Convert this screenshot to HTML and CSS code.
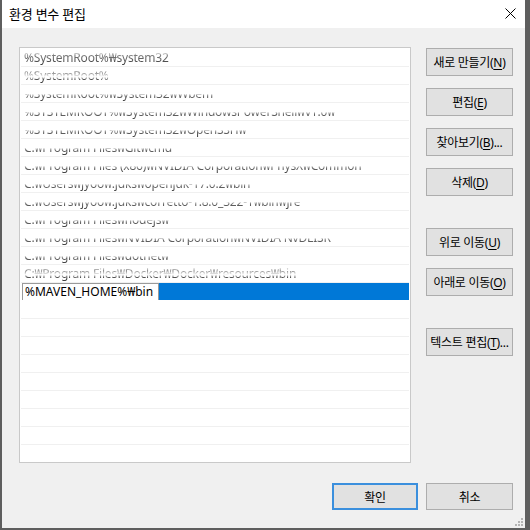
FILE: index.html
```html
<!DOCTYPE html>
<html lang="ko">
<head>
<meta charset="utf-8">
<link rel="stylesheet" href="styles.css">
</head>
<body>
<div class="win">
  <div class="titlebar">
    <span class="title">환경 변수 편집</span>
    <svg class="close" width="11" height="11" viewBox="0 0 11 11"><path d="M0.5 0.5L10.5 10.5M10.5 0.5L0.5 10.5" stroke="#000" stroke-width="1" fill="none"/></svg>
  </div>
  <div class="content">
    <div class="main">
      <div class="list">
        <div class="row"><span class="t t0">%SystemRoot%₩system32</span></div>
        <div class="row"><span class="t t1">%SystemRoot%</span></div>
        <div class="row"><span class="t">%SystemRoot%₩System32₩Wbem</span></div>
        <div class="row"><span class="t">%SYSTEMROOT%₩System32₩WindowsPowerShell₩v1.0₩</span></div>
        <div class="row"><span class="t">%SYSTEMROOT%₩System32₩OpenSSH₩</span></div>
        <div class="row"><span class="t">C:₩Program Files₩Git₩cmd</span></div>
        <div class="row"><span class="t">C:₩Program Files (x86)₩NVIDIA Corporation₩PhysX₩Common</span></div>
        <div class="row"><span class="t">C:₩Users₩jyoo₩.jdks₩openjdk-17.0.2₩bin</span></div>
        <div class="row"><span class="t">C:₩Users₩jyoo₩.jdks₩corretto-1.8.0_322-1₩bin₩jre</span></div>
        <div class="row"><span class="t">C:₩Program Files₩nodejs₩</span></div>
        <div class="row"><span class="t">C:₩Program Files₩NVIDIA Corporation₩NVIDIA NvDLISR</span></div>
        <div class="row"><span class="t">C:₩Program Files₩dotnet₩</span></div>
        <div class="row"><span class="t t2">C:₩Program Files₩Docker₩Docker₩resources₩bin</span></div>
        <div class="row sel"><span class="edit">%MAVEN_HOME%₩bin</span><span class="hl"></span></div>
        <div class="row"></div>
        <div class="row"></div>
        <div class="row"></div>
        <div class="row"></div>
        <div class="row"></div>
        <div class="row"></div>
        <div class="row"></div>
        <div class="row"></div>
        <div class="row last"></div>
      </div>
      <div class="side">
        <button class="btn">새로 만들기(<u>N</u>)</button>
        <button class="btn">편집(<u>E</u>)</button>
        <button class="btn">찾아보기(<u>B</u>)...</button>
        <button class="btn">삭제(<u>D</u>)</button>
        <button class="btn grp">위로 이동(<u>U</u>)</button>
        <button class="btn">아래로 이동(<u>O</u>)</button>
        <button class="btn grp">텍스트 편집(<u>T</u>)...</button>
      </div>
    </div>
    <div class="footer">
      <button class="btn ok">확인</button>
      <button class="btn cancel">취소</button>
    </div>
  </div>
  <svg class="grip" width="8" height="8" viewBox="0 0 8 8" fill="#b4b4b4"><rect x="6" y="0" width="2" height="2"/><rect x="3" y="3" width="2" height="2"/><rect x="6" y="3" width="2" height="2"/><rect x="0" y="6" width="2" height="2"/><rect x="3" y="6" width="2" height="2"/><rect x="6" y="6" width="2" height="2"/></svg>
</div>
</body>
</html>
```

FILE: styles.css
```css
* { box-sizing: border-box; }
html, body { margin: 0; padding: 0; }
body {
  background: #5e5e5e;
  width: 530px;
  height: 530px;
  overflow: hidden;
  font-family: "Noto Sans", "Noto Sans CJK KR", sans-serif;
}
.win {
  position: relative;
  margin-left: 2px;
  width: 523px;
  height: 528px;
  background: #f0f0f0;
  display: flex;
  flex-direction: column;
}
.titlebar {
  height: 28px;
  background: #fff;
  display: flex;
  align-items: center;
  justify-content: space-between;
  padding: 0 9px 0 7px;
}
.title {
  font-family: "Noto Sans CJK KR", sans-serif;
  font-size: 13px;
  letter-spacing: -0.3px;
  color: #000;
  line-height: 1;
  margin-top: -2px;
}
.close { margin-top: -2px; }
.content {
  flex: 1;
  padding: 19px 12px 0 17px;
  display: flex;
  flex-direction: column;
}
.main {
  display: flex;
  gap: 15px;
}
.list {
  width: 392px;
  height: 416px;
  background: #fff;
  border: 1px solid #c9c9c9;
  padding: 1px 1px 0 1px;
  overflow: hidden;
}
.row {
  height: 18px;
  border-bottom: 1px solid #f0f0f0;
  display: flex;
  align-items: center;
  padding-left: 3px;
  font-size: 12px;
  white-space: nowrap;
  overflow: hidden;
}
.t {
  color: transparent;
  background: linear-gradient(to bottom, rgba(255,255,255,0) 0%, rgba(255,255,255,0) 48%, #6a6a6a 62%, #3a3a3a 100%);
  -webkit-background-clip: text;
  background-clip: text;
  line-height: 16px;
  letter-spacing: -0.2px;
}
.t0 {
  background: linear-gradient(to bottom, rgba(255,255,255,0) 10%, #777 35%, #333 100%);
  -webkit-background-clip: text;
  background-clip: text;
}
.t1, .t2 {
  background: linear-gradient(to bottom, rgba(255,255,255,0) 5%, #888 30%, rgba(255,255,255,0) 55%, #555 70%, #333 100%);
  -webkit-background-clip: text;
  background-clip: text;
}
.row.sel {
  padding-left: 0;
  border-bottom: 1px solid #fff;
}
.edit {
  width: 137px;
  height: 18px;
  margin-left: 1px;
  border: 1px solid #9a9a9a;
  background: #fff;
  color: #000;
  font-size: 12px;
  line-height: 16px;
  padding-left: 2px;
}
.hl {
  flex: 1;
  height: 18px;
  background: #0078d7;
}
.side {
  display: flex;
  flex-direction: column;
  gap: 12px;
  padding-top: 1px;
}
.btn {
  width: 87px;
  height: 28px;
  background: #e1e1e1;
  border: 1px solid #adadad;
  font-family: "Noto Sans", "Noto Sans CJK KR", sans-serif;
  font-size: 12px;
  color: #000;
  padding: 0;
  margin: 0;
  white-space: nowrap;
  letter-spacing: -0.3px;
}
.btn u { text-underline-offset: 2px; }
.btn.grp { margin-top: 20px; }
.footer {
  display: flex;
  justify-content: flex-end;
  gap: 8px;
  margin-top: 20px;
}
.ok {
  width: 86px;
  height: 27px;
  border: 2px solid #3b8fdd;
}
.cancel {
  width: 87px;
  height: 27px;
}
.grip {
  position: absolute;
  right: 2px;
  bottom: 2px;
}
```
